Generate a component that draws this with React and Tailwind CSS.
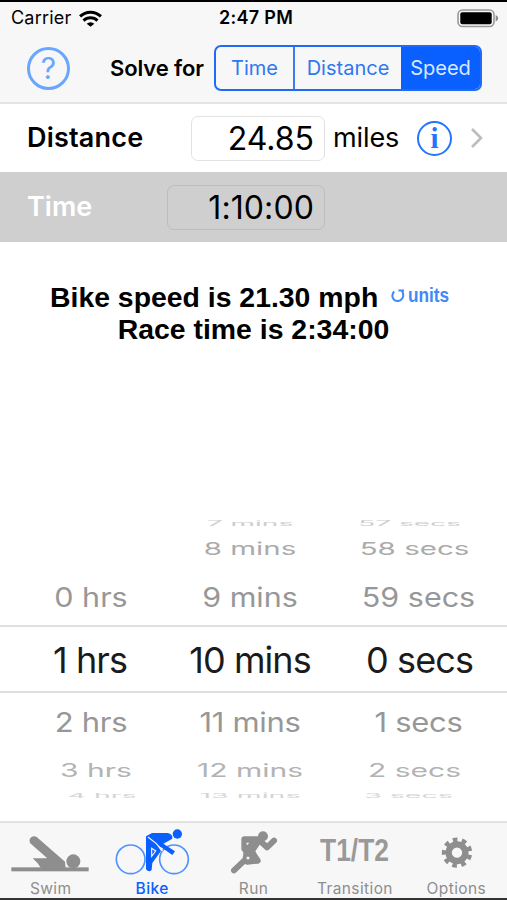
const tabs = [
  { id: 'swim', label: 'Swim' },
  { id: 'bike', label: 'Bike' },
  { id: 'run', label: 'Run' },
  { id: 'transition', label: 'Transition' },
  { id: 'options', label: 'Options' }
]

const modes = [
  { name: 'Time', className: 'w-[77px] text-[#2f78ee]' },
  { name: 'Distance', className: 'w-[108px] border-l-2 border-[#3b7df0] text-[#2f78ee]' },
  { name: 'Speed', className: 'w-[79px] bg-[#0a60ff] text-[#d9e8ff]' }
]

// rows of the wheel from top to bottom, squeezed towards the edges
const wheelRows = [
  { cell: 'h-3', text: 'scale-y-[0.26] -translate-y-[1px] text-[#cdcdcd]' },
  { cell: 'h-[38px]', text: 'scale-y-[0.6] text-[#ababab]' },
  { cell: 'h-[57px]', text: 'scale-y-[0.87] translate-y-[1px] text-[#979797]' },
  { cell: 'h-[68px] border-y-2 border-[#e0e0e0]', text: 'translate-y-[1px] text-[#1b1b1b]' },
  { cell: 'h-[57px]', text: 'scale-y-[0.87] text-[#979797]' },
  { cell: 'h-[38px]', text: 'scale-y-[0.6] translate-y-[1px] text-[#b3b3b3]' },
  { cell: 'h-[10px]', text: 'scale-y-[0.24] translate-y-[2px] text-[#d4d4d4]' }
]

const sizes = [
  'text-[28px]',
  'text-[29.5px]',
  'text-[30.5px]',
  'text-[36px] tracking-[-0.9px]',
  'text-[31px] tracking-[-0.3px]',
  'text-[30px]',
  'text-[28.5px]'
]

const wheels = [
  {
    id: 'hours',
    width: 'w-[180px]',
    values: ['', '', '0 hrs', '1 hrs', '2 hrs', '3 hrs', '4 hrs'],
    offsets: ['', '', 'left-px', 'left-0', 'left-px', 'left-[6px]', 'left-[12px]']
  },
  {
    id: 'minutes',
    width: 'w-[140px]',
    values: ['7 mins', '8 mins', '9 mins', '10 mins', '11 mins', '12 mins', '13 mins'],
    offsets: ['', '', '', '', '', '', '']
  },
  {
    id: 'seconds',
    width: 'w-[187px]',
    values: ['57 secs', '58 secs', '59 secs', '0 secs', '1 secs', '2 secs', '3 secs'],
    offsets: ['left-[-4px]', 'left-px', 'left-[5px]', 'left-[6px]', 'left-[5px]', 'left-px', 'left-[-5px]']
  }
]

const WifiIcon = () => (
  <svg width="23" height="17" viewBox="0 0 66 48" fill="none" stroke="#000" strokeWidth="8.5">
    <path d="M3 18a43 43 0 0 1 60 0" />
    <path d="M13 30a29 29 0 0 1 40 0" />
    <path d="M22 39a16 16 0 0 1 22 0L33 48z" fill="#000" stroke="none" />
  </svg>
)

const BatteryIcon = () => (
  <svg width="42" height="19" viewBox="0 0 42 19">
    <rect x="1" y="1" width="36" height="16.5" rx="4.5" fill="#f7f7f7" stroke="#999" strokeWidth="1.6" />
    <rect x="3.3" y="3.3" width="31.4" height="12" rx="2" />
    <path d="M38.7 6q2.4 1 2.4 3.2t-2.4 3.2z" fill="#888" />
  </svg>
)

const TabIcon = ({ id }) => {
  if (id === 'swim') {
    return (
      <svg className="overflow-visible" width="84" height="50" viewBox="26 24 252 150" fill="currentColor">
        <rect x="33" y="157" width="232" height="12" />
        <circle cx="219" cy="139" r="21" />
        <path d="M101 77 180 146" stroke="currentColor" strokeWidth="27" strokeLinecap="round" />
        <path d="M97 130 138 130 150 110 194 140 196 160 122 160 112 145z" />
      </svg>
    )
  }

  if (id === 'bike') {
    return (
      <svg className="overflow-visible" width="84" height="50" viewBox="330 24 252 150" fill="currentColor">
        <g fill="none" stroke="#4f92ff" strokeWidth="5">
          <circle cx="392" cy="133" r="43" />
          <circle cx="522" cy="133" r="43" />
        </g>
        <circle cx="532" cy="57" r="14" />
        <path d="M438 64 456 54 503 54Q519 57 517 71L490 86 525 109 517 120 486 98 473 92 483 108 457 144 455 164Q448 174 438 163z" />
        <path d="M444 66 469 86 488 108M455 100v24l12-16z" fill="none" stroke="#f7f7f7" strokeWidth="3.5" />
      </svg>
    )
  }

  if (id === 'run') {
    return (
      <svg className="overflow-visible" width="84" height="50" viewBox="36 24 252 150" fill="currentColor">
        <circle cx="189" cy="64" r="15" />
        <g fill="none" stroke="currentColor" strokeWidth="18" strokeLinecap="round" strokeLinejoin="round">
          <path d="M179 73H133V101M178 76 201 97 222 77" />
          <path d="M102 166 136 134 141 111M157 113 173 137 142 140" />
        </g>
        <path d="M143 76H188L166 109 178 138 135 144 129 108z" />
        <path d="M139 83h9l-7 8zM140 125h8v8h-8z" fill="#f7f7f7" />
      </svg>
    )
  }

  if (id === 'options') {
    return (
      <svg width="84" height="50" viewBox="102 24 252 150" fill="none" stroke="currentColor">
        <circle cx="231" cy="113" r="25" strokeWidth="19" />
        <circle cx="231" cy="113" r="38" strokeWidth="15" strokeDasharray="13.5 13.03" strokeDashoffset="-6.52" />
      </svg>
    )
  }

  return (
    <span className="block h-[50px] scale-x-[0.85] text-center font-['Liberation_Sans',sans-serif] text-[31px] font-bold leading-[56px] text-[#999]">
      T1/T2
    </span>
  )
}

const Header = () => (
  <header className="h-[104px] border-b-2 border-t-2 border-b-[#e4e4e4] border-t-black bg-[#f7f7f7]">
    <div className="grid h-8 grid-cols-3 items-center pl-[11px] pr-[8px]">
      <div className="flex items-center gap-[8px] text-[18px] leading-8 tracking-[0.2px]">
        Carrier
        <WifiIcon />
      </div>
      <p className="relative left-px text-center text-[18px] font-semibold leading-8 tracking-[0.3px]">2:47 PM</p>
      <div className="flex justify-end">
        <BatteryIcon />
      </div>
    </div>

    <div className="flex h-[68px] items-center pl-[27px]">
      <button
        type="button"
        className="flex size-[43px] items-center justify-center rounded-full border-[3px] border-[#6aa6fb] text-[30px] leading-none text-[#6aa6fb]"
      >
        ?
      </button>
      <p className="ml-[40px] w-[104px] whitespace-nowrap text-[22px] font-semibold tracking-[-0.1px]">Solve for</p>
      <div className="flex h-[46px] overflow-hidden rounded-[7px] border-2 border-[#1f6bf5]">
        {modes.map((mode) => (
          <button key={mode.name} type="button" className={`text-[20px] ${mode.className}`}>
            {mode.name}
          </button>
        ))}
      </div>
    </div>
  </header>
)

const Picker = () => (
  <div className="mt-auto mb-[23px]">
    {wheelRows.map((row, index) => (
      <div key={index} className={`flex items-center ${row.cell}`}>
        {wheels.map((wheel) => (
          <div key={wheel.id} className={`flex justify-center whitespace-nowrap ${wheel.width}`}>
            <span className={`relative leading-none ${sizes[index]} ${row.text} ${wheel.offsets[index]}`}>
              {wheel.values[index]}
            </span>
          </div>
        ))}
      </div>
    ))}
  </div>
)

const App = () => {
  return (
    <div className="flex h-[900px] w-[507px] flex-col overflow-hidden bg-white font-['Inter',sans-serif] text-black">
      <Header />

      <div className="flex h-[68px] items-center pl-[27px]">
        <p className="w-[164px] text-[27px] font-semibold tracking-[0.2px]">Distance</p>
        <div className="h-[45px] w-[134px] rounded-[7px] border border-[#e2e2e2] pr-[10px] text-right text-[32px] leading-[43px]">
          24.85
        </div>
        <p className="ml-[8px] w-[84px] text-[27px] tracking-[-0.1px]">miles</p>
        <button
          type="button"
          className="flex size-[35px] items-center justify-center rounded-full border-2 border-[#2674fa] font-['Liberation_Serif',serif] text-[29px] font-bold leading-none text-[#2674fa]"
        >
          i
        </button>
        <svg className="ml-[18px]" width="14" height="22" viewBox="0 0 14 22" fill="none" stroke="#bcbcbc" strokeWidth="2.6">
          <path d="M2 2l9 9-9 9" />
        </svg>
      </div>

      <div className="flex h-[70px] items-center bg-[#cfcfcf] pl-[27px]">
        <p className="w-[140px] text-[27px] font-semibold text-white">Time</p>
        <div className="h-[45px] w-[158px] rounded-[7px] border border-[#bdbdbd] pr-[10px] text-right text-[32px] leading-[43px] tracking-[0.1px]">
          1:10:00
        </div>
      </div>

      <div className="mt-[39px] font-['Liberation_Sans',sans-serif] text-[28.4px] font-bold leading-8">
        <div className="flex pl-[50px]">
          <p className="w-[341px]">Bike speed is 21.30 mph</p>
          <button type="button" className="flex h-7 items-center gap-[3px] text-[#4189f8]">
            <svg width="14" height="15" viewBox="0 0 14 15" fill="none" stroke="currentColor" strokeWidth="2">
              <path d="M3.2 3.5C-.5 7.5 2 13 6.5 13S14 8 11 3M7.5 2.4h5.5" />
            </svg>
            <span className="origin-left scale-x-[0.86] text-[20px]">units</span>
          </button>
        </div>
        <p className="text-center">Race time is 2:34:00</p>
      </div>

      <Picker />

      <nav className="flex h-[79px] border-b-2 border-t-2 border-b-[#333] border-t-[#e2e2e2] bg-[#f7f7f7]">
        {tabs.map((tab) => (
          <button
            key={tab.id}
            type="button"
            className={`flex flex-1 flex-col items-center ${tab.id === 'bike' ? 'text-[#0a60ff]' : 'text-[#8e8e8e]'}`}
          >
            <TabIcon id={tab.id} />
            <span
              className={`relative top-[2px] mt-[4px] text-[15.5px] leading-5 tracking-[0.4px] ${tab.id === 'bike' ? 'font-medium' : ''}`}
            >
              {tab.label}
            </span>
          </button>
        ))}
      </nav>
    </div>
  )
}

export default App
